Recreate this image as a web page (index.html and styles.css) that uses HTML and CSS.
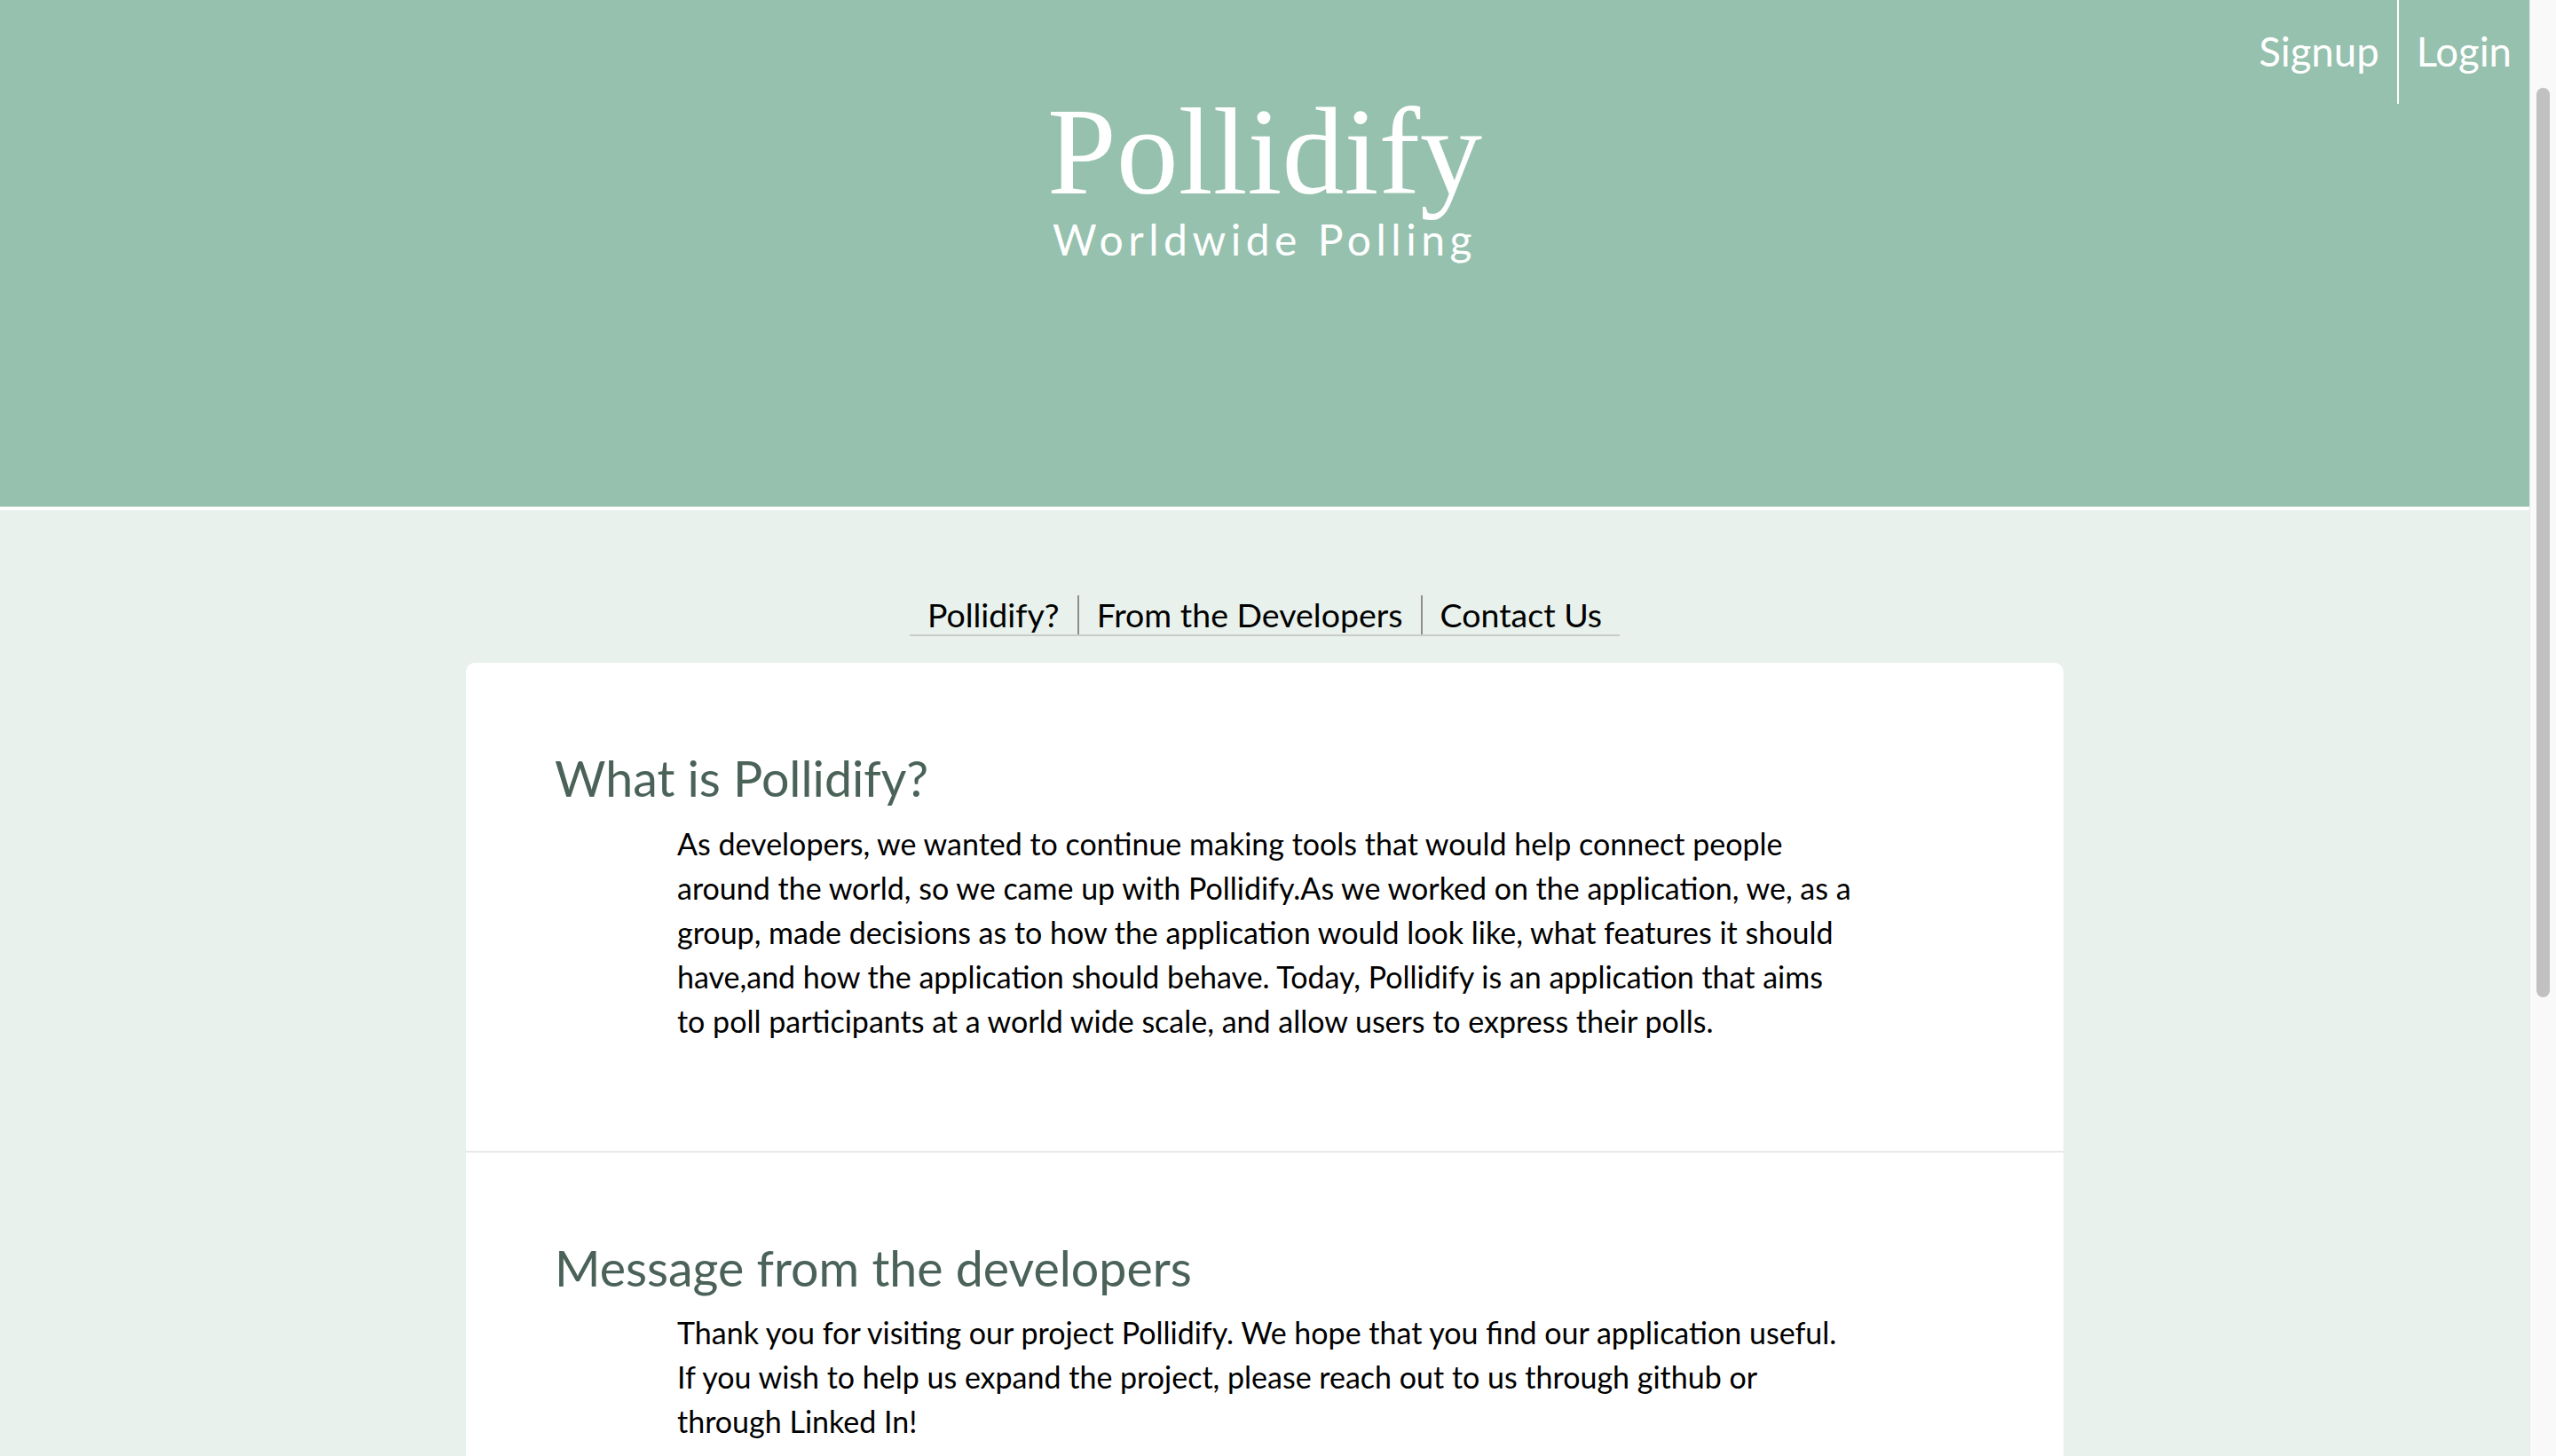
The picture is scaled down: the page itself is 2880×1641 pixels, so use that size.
FILE: index.html
```html
<!DOCTYPE html>
<html lang="en">
<head>
<meta charset="utf-8">
<title>Pollidify</title>
<link rel="stylesheet" href="styles.css">
</head>
<body>
<div class="page">
  <div class="main">
    <header class="hero">
      <div class="hero-spacer"></div>
      <div class="brand">
        <h1 class="brand-title">Pollidify</h1>
        <p class="brand-sub">Worldwide Polling</p>
      </div>
      <nav class="auth">
        <a class="auth-link" href="#">Signup</a>
        <a class="auth-link auth-login" href="#">Login</a>
      </nav>
    </header>
    <div class="content">
      <nav class="tabs">
        <a class="tab" href="#">Pollidify?</a>
        <a class="tab" href="#">From the Developers</a>
        <a class="tab" href="#">Contact Us</a>
      </nav>
      <main class="card">
        <section class="section">
          <h2 class="section-title">What is Pollidify?</h2>
          <p class="section-text">As developers, we wanted to continue making tools that would help connect people<br>around the world, so we came up with Pollidify.As we worked on the application, we, as a<br>group, made decisions as to how the application would look like, what features it should<br>have,and how the application should behave. Today, Pollidify is an application that aims<br>to poll participants at a world wide scale, and allow users to express their polls.</p>
        </section>
        <section class="section">
          <h2 class="section-title">Message from the developers</h2>
          <p class="section-text">Thank you for visiting our project Pollidify. We hope that you find our application useful.<br>If you wish to help us expand the project, please reach out to us through github or<br>through Linked In!</p>
        </section>
      </main>
    </div>
  </div>
  <div class="scrollbar"><div class="scroll-thumb"></div></div>
</div>
</body>
</html>
```

FILE: styles.css
```css
html, body {
  margin: 0;
  padding: 0;
  height: 100%;
  overflow: hidden;
}
body {
  font-family: "Lato", "Liberation Sans", sans-serif;
  color: #000;
  background: #e8f1ec;
}
.page {
  display: flex;
  height: 100vh;
}
.main {
  flex: 1;
  min-width: 0;
  background: #e8f1ec;
}
.hero {
  height: 571px;
  background: #95c1ae;
  border-bottom: 4px solid #fdfefd;
  display: grid;
  grid-template-columns: 1fr auto 1fr;
  align-items: start;
}
.brand {
  text-align: center;
  padding-top: 101px;
}
.brand-title {
  margin: 0;
  font-family: "Liberation Serif", "DejaVu Serif", serif;
  font-weight: 400;
  font-size: 140px;
  line-height: 1;
  color: #fff;
}
.brand-sub {
  margin: 5px 0 0;
  font-size: 48px;
  line-height: 1;
  letter-spacing: 5.5px;
  color: #fff;
}
.auth {
  justify-self: end;
  display: flex;
}
.auth-link {
  color: #fff;
  text-decoration: none;
  font-size: 45.5px;
  line-height: 1;
  padding: 35px 20px 36px 21px;
}
.auth-login {
  border-left: 2px solid #fff;
  padding-left: 20px;
  padding-right: 20px;
}
.content {
  display: flex;
  flex-direction: column;
  align-items: center;
  padding-top: 96px;
}
.tabs {
  display: flex;
  border-bottom: 2px solid #c9cdca;
}
.tab {
  color: #000;
  text-decoration: none;
  font-size: 37.5px;
  line-height: 44px;
  padding: 0 20px;
}
.tab + .tab {
  border-left: 2px solid #8e8e8e;
}
.card {
  margin-top: 30px;
  width: 1800px;
  background: #fff;
  border-radius: 10px 10px 0 0;
}
.section {
  padding: 97px 100px 121px;
}
.section + .section {
  border-top: 2px solid #e7e9e8;
}
.section-title {
  margin: 0 0 15px;
  font-size: 55.5px;
  font-weight: 400;
  line-height: 1.2;
  color: #4a6258;
}
.section-text {
  margin: 0 0 0 138px;
  font-size: 34px;
  line-height: 50px;
  color: #000;
}
.scrollbar {
  width: 29px;
  flex: none;
  background: #f9f9f9;
  border-left: 1px solid #e9e9e9;
}
.scroll-thumb {
  margin: 99px 0 0 7px;
  width: 15px;
  height: 1025px;
  border-radius: 8px;
  background: #c1c1c1;
}
```
